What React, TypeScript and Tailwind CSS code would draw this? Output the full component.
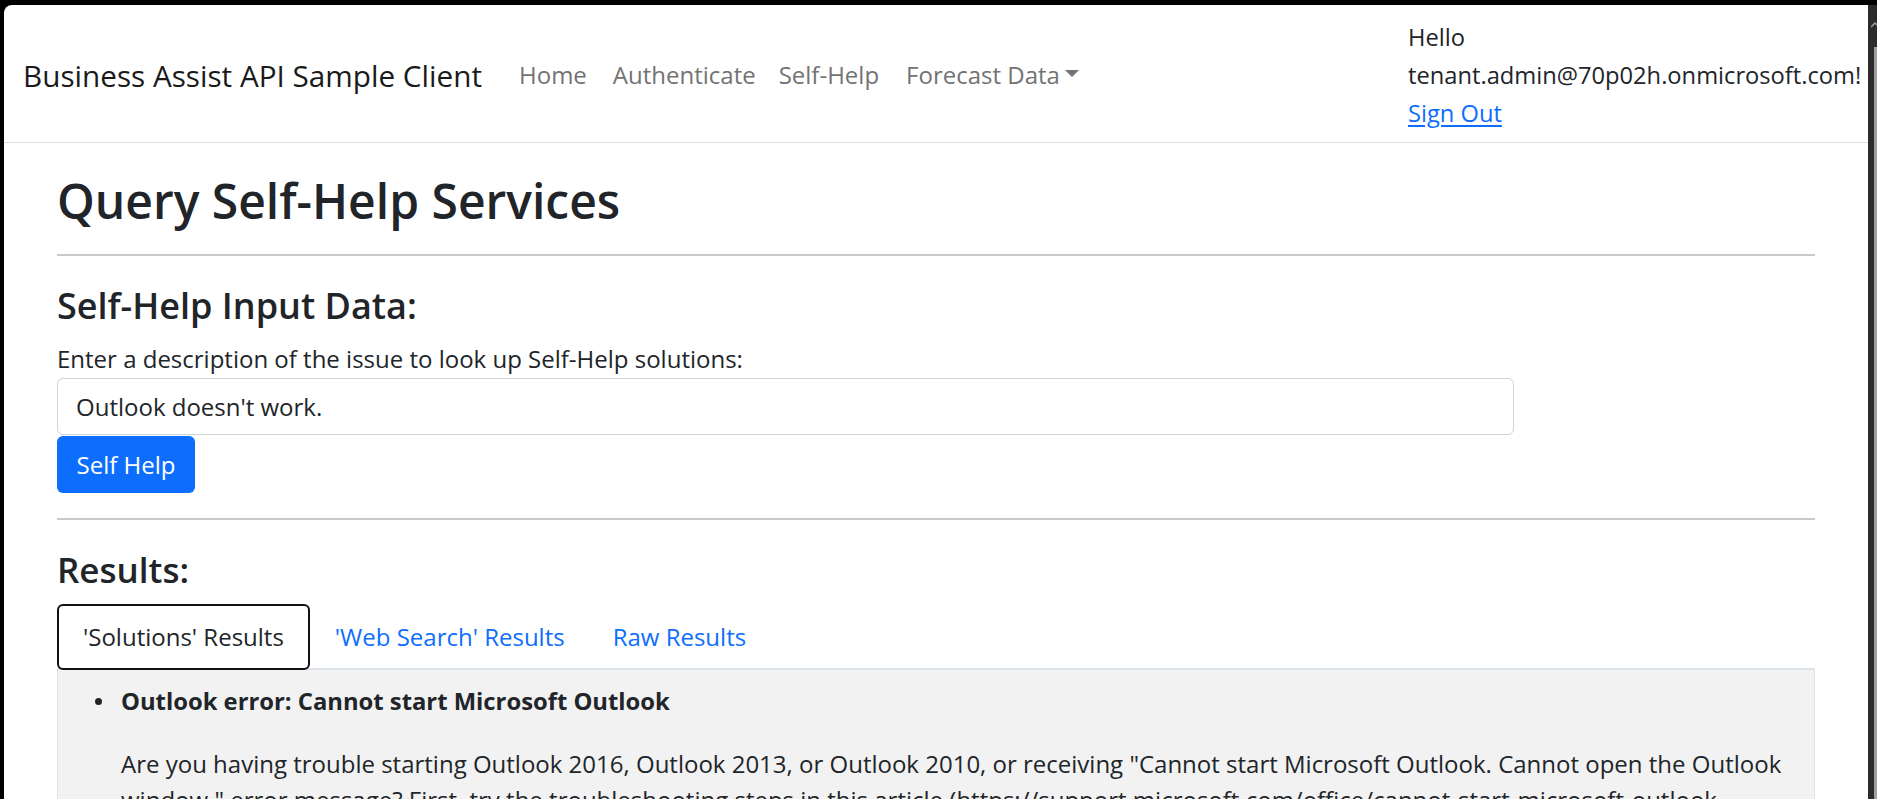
import React, { useState } from 'react';

const tabs = ["'Solutions' Results", "'Web Search' Results", 'Raw Results'];

const App: React.FC = () => {
  const [query, setQuery] = useState("Outlook doesn't work.");
  const [activeTab, setActiveTab] = useState(0);

  return (
    <div className="w-[1877px] h-[799px] bg-black pt-[5px] pl-[4px] flex overflow-hidden font-['Open_Sans',sans-serif] text-[#212529]">
      <div className="w-[1864px] h-full bg-white rounded-tl-[8px] overflow-hidden">
        {/* navbar */}
        <nav className="flex items-center pl-[19px] pr-[18px] pt-[13px] pb-[10px] border-b border-[#dfdfdf]">
          <a className="text-[29.7px] leading-[45px] text-[#1a1a1a] mr-[24px] whitespace-nowrap">Business Assist API Sample Client</a>
          <ul className="flex items-center text-[24px] leading-[36px] text-[#737373]">
            <li className="px-[13px]">Home</li>
            <li className="pl-[13px] pr-[10px]">Authenticate</li>
            <li className="px-[13px]">Self-Help</li>
            <li className="pl-[14px] pr-[13px] flex items-center">
              Forecast Data
              <span className="ml-[5px] mb-[4px] w-0 h-0 border-l-[7px] border-r-[7px] border-t-[7px] border-l-transparent border-r-transparent border-t-[#737373]" />
            </li>
          </ul>
          <div className="ml-auto w-[442px] shrink-0 text-[23.7px] leading-[38px] whitespace-nowrap">
            <div>Hello</div>
            <div>tenant.admin@70p02h.onmicrosoft.com!</div>
            <a className="text-[#0d6efd] underline underline-offset-[3px]">Sign Out</a>
          </div>
        </nav>

        <main className="px-[53px] pt-[29px]">
          <h1 className="text-[48px] leading-[58px] font-semibold">Query Self-Help Services</h1>
          <div className="mt-[24px] h-[2px] bg-[#c9c9c9]" />

          <h3 className="mt-[28px] text-[36px] leading-[43px] font-semibold">Self-Help Input Data:</h3>
          <label className="block mt-[14px] text-[24px] leading-[36px]">
            Enter a description of the issue to look up Self-Help solutions:
          </label>
          <input
            value={query}
            onChange={(e) => setQuery(e.target.value)}
            className="mt-[1px] block w-[1457px] h-[57px] pl-[18px] border border-[#ced4da] rounded-[6px] text-[24px] text-[#212529] outline-none"
          />
          <button className="mt-[1px] w-[138px] h-[57px] flex items-center justify-center bg-[#0d6efd] text-white text-[24px] rounded-[6px]">
            Self Help
          </button>
          <div className="mt-[25px] h-[2px] bg-[#c9c9c9]" />

          <h3 className="mt-[28px] text-[35px] leading-[43px] font-semibold">Results:</h3>
          <div className="mt-[13px] flex relative z-10 -mb-[2px] text-[24px] leading-[36px]">
            {tabs.map((t, i) => (
              <button
                key={t}
                onClick={() => setActiveTab(i)}
                className={
                  i === activeTab
                    ? 'px-[24px] py-[13px] border-2 border-[#111] rounded-[6px] bg-white text-[#212529] whitespace-nowrap'
                    : 'pl-[23px] pr-[21px] py-[13px] border-2 border-transparent text-[#0d6efd] whitespace-nowrap'
                }
              >
                {t}
              </button>
            ))}
          </div>
          <div className="h-[200px] bg-[#f2f2f2] border-t-2 border-t-[#dde3ea] border-x border-x-[#e2e2e2] pl-[16px] pr-[10px] pt-[13px] text-[24px] leading-[36px]">
            <div className="flex">
              <span className="shrink-0 w-[7px] h-[7px] rounded-full bg-[#212529] ml-[21px] mr-[19px] mt-[15px]" />
              <div>
                <div className="font-bold text-[23.8px]">Outlook error: Cannot start Microsoft Outlook</div>
                <p className="mt-[27px]">
                  Are you having trouble starting Outlook 2016, Outlook 2013, or Outlook 2010, or receiving "Cannot start Microsoft Outlook. Cannot open the Outlook window." error message? First, try the troubleshooting steps in this article (https://support.microsoft.com/office/cannot-start-microsoft-outlook-cannot-open-the-outlook-window).
                </p>
              </div>
            </div>
          </div>
        </main>
      </div>

      {/* scrollbar */}
      <div className="w-[9px] h-full bg-[#2b2b2b] flex flex-col items-end">
        <svg width="6" height="6" viewBox="0 0 6 6" className="mt-[17px]">
          <path d="M0 5 L4 1 L6 3" stroke="#9e9e9e" strokeWidth="1.5" fill="none" />
        </svg>
        <div className="mt-[19px] w-[3px] flex-1 bg-[#9f9f9f]" />
      </div>
    </div>
  );
};

export default App;
